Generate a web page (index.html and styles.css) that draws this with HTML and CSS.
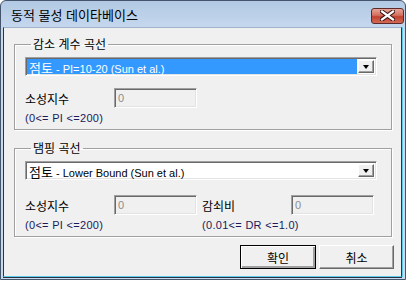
FILE: index.html
```html
<!DOCTYPE html>
<html lang="ko">
<head>
    <meta charset="UTF-8">
    <title>동적 물성 데이타베이스</title>
    <link rel="stylesheet" href="styles.css">
</head>
<body>
    <div class="window">
        <div class="titlebar">
            <span class="title">동적 물성 데이타베이스</span>
            <div class="close">
                <svg width="15" height="11" viewBox="0 0 15 11">
                    <path d="M2 1.5 L13 9.5 M13 1.5 L2 9.5" stroke="#3b1010" stroke-width="4.2" stroke-linecap="square"/>
                    <path d="M2 1.5 L13 9.5 M13 1.5 L2 9.5" stroke="#ffffff" stroke-width="2.2" stroke-linecap="square"/>
                </svg>
            </div>
        </div>
        <div class="client">
            <fieldset class="group first">
                <legend>감소 계수 곡선</legend>
                <div class="combo">
                    <div class="combo-value selected"><span class="ko">점토</span> - PI=10-20 (Sun et al.)</div>
                    <div class="combo-arrow"><span class="tri"></span></div>
                </div>
                <div class="fields">
                    <div class="field-col">
                        <div class="field">
                            <span class="label">소성지수</span>
                            <div class="textbox">0</div>
                        </div>
                        <div class="hint">(0&lt;= PI &lt;=200)</div>
                    </div>
                </div>
            </fieldset>

            <fieldset class="group second">
                <legend>댐핑 곡선</legend>
                <div class="combo">
                    <div class="combo-value"><span class="ko">점토</span> - Lower Bound (Sun et al.)</div>
                    <div class="combo-arrow"><span class="tri"></span></div>
                </div>
                <div class="fields">
                    <div class="field-col">
                        <div class="field">
                            <span class="label">소성지수</span>
                            <div class="textbox">0</div>
                        </div>
                        <div class="hint">(0&lt;= PI &lt;=200)</div>
                    </div>
                    <div class="field-col">
                        <div class="field">
                            <span class="label">감쇠비</span>
                            <div class="textbox">0</div>
                        </div>
                        <div class="hint">(0.01&lt;= DR &lt;=1.0)</div>
                    </div>
                </div>
            </fieldset>

            <div class="buttons">
                <button class="btn default">확인</button>
                <button class="btn">취소</button>
            </div>
        </div>
    </div>
</body>
</html>
```

FILE: styles.css
```css
body {
    margin: 0;
    width: 406px;
    height: 282px;
    overflow: hidden;
    background-color: #ffffff;
    font-family: "Noto Sans CJK KR", sans-serif;
}
.window {
    width: 406px;
    height: 280px;
    box-sizing: border-box;
    border: 1px solid #44546a;
    border-radius: 6px 6px 0 0;
    background: linear-gradient(#b2c9e4, #c7d9ee 30px, #c7d9ee);
    padding: 0 3px 2px 2px;
    display: flex;
    flex-direction: column;
}
.titlebar {
    height: 26px;
    display: flex;
    align-items: center;
    justify-content: space-between;
    padding-left: 8px;
}
.title {
    font-size: 13px;
    color: #000;
    margin-top: 1px;
}
.close {
    width: 33px;
    height: 16px;
    margin-top: 3px;
    margin-right: -2px;
    box-sizing: border-box;
    border: 1px solid #5a2a2a;
    border-radius: 3px;
    background: linear-gradient(#e8a597, #d2705f 45%, #c0412f 55%, #d26a55);
    display: flex;
    align-items: center;
    justify-content: center;
}
.client {
    flex: 1;
    background-color: #f0f0f0;
    border-left: 1px solid #2a3440;
    border-right: 1px solid #2a3440;
    border-top: 1px solid #9fb4cc;
    border-bottom: 1px solid #5fcbeb;
    box-shadow: 1px 0 0 #5fcbeb, 0 1px 0 #2a3440;
    padding: 0 9px 0 10px;
    display: flex;
    flex-direction: column;
}
.group {
    margin: 9px 0 0 0;
    padding: 6px 12px 4px 10px;
    border: 1px solid #a0a0a0;
    box-shadow: inset 1px 1px 0 #ffffff, 1px 1px 0 #ffffff;
    min-width: 0;
}
.group.second {
    margin-top: 11px;
}
.group legend {
    font-size: 12px;
    line-height: 14px;
    padding: 0 2px;
    margin-left: 6px;
    color: #000;
}
.combo {
    width: 352px;
    height: 19px;
    box-sizing: border-box;
    border-top: 1px solid #a0a0a0;
    border-left: 1px solid #a0a0a0;
    border-right: 1px solid #ffffff;
    border-bottom: 1px solid #ffffff;
    box-shadow: inset 1px 1px 0 #696969, inset -1px -1px 0 #e3e3e3;
    background-color: #ffffff;
    display: flex;
    padding: 2px;
}
.combo-value {
    flex: 1;
    font-family: "Liberation Sans", "Noto Sans CJK KR", sans-serif;
    font-size: 11px;
    line-height: 15px;
    padding-left: 1px;
    color: #000;
    white-space: nowrap;
}
.combo-value .ko {
    font-family: "Noto Sans CJK KR", sans-serif;
    font-size: 13px;
}
.combo-value.selected {
    background-color: #3399ff;
    color: #ffffff;
    margin: -1px 1px -1px -1px;
    line-height: 17px;
    padding-left: 2px;
}
.combo-arrow {
    width: 16px;
    box-sizing: border-box;
    background-color: #f0f0f0;
    border-top: 1px solid #ffffff;
    border-left: 1px solid #ffffff;
    border-right: 1px solid #696969;
    border-bottom: 1px solid #696969;
    box-shadow: inset -1px -1px 0 #a0a0a0;
    display: flex;
    align-items: center;
    justify-content: center;
}
.tri {
    width: 0;
    height: 0;
    border-left: 3.5px solid transparent;
    border-right: 3.5px solid transparent;
    border-top: 4px solid #000;
    margin-top: 1px;
}
.fields {
    display: flex;
    margin-top: 12px;
}
.group.second .fields {
    margin-top: 15px;
}
.field-col {
    width: 196px;
}
.field {
    display: flex;
    align-items: center;
}
.label {
    width: 89px;
    font-size: 12px;
    color: #000;
}
.textbox {
    width: 83px;
    height: 20px;
    box-sizing: border-box;
    border-top: 1px solid #a0a0a0;
    border-left: 1px solid #a0a0a0;
    border-right: 1px solid #ffffff;
    border-bottom: 1px solid #ffffff;
    box-shadow: inset 1px 1px 0 #696969, inset -1px -1px 0 #e3e3e3;
    background-color: #f0f0f0;
    font-family: "Liberation Sans", sans-serif;
    font-size: 11px;
    line-height: 18px;
    color: #8c8c8c;
    padding-left: 3px;
}
.hint {
    font-family: "Liberation Sans", sans-serif;
    font-size: 11px;
    line-height: 13px;
    margin-top: 4px;
    color: #1a1a5a;
    letter-spacing: 0.3px;
}
.buttons {
    display: flex;
    justify-content: flex-end;
    gap: 3px;
    margin-top: 8px;
    margin-right: -2px;
}
.btn {
    width: 75px;
    height: 24px;
    box-sizing: border-box;
    background-color: #f0f0f0;
    border-top: 1px solid #ffffff;
    border-left: 1px solid #ffffff;
    border-right: 1px solid #696969;
    border-bottom: 1px solid #696969;
    box-shadow: inset -1px -1px 0 #a0a0a0;
    font-family: "Noto Sans CJK KR", sans-serif;
    font-size: 12px;
    color: #000;
    padding: 0;
}
.btn.default {
    width: 76px;
    border: 1px solid #000;
    box-shadow: inset 1px 1px 0 #ffffff, inset -2px -2px 0 #a0a0a0, inset -1px -1px 0 #696969;
}
```
